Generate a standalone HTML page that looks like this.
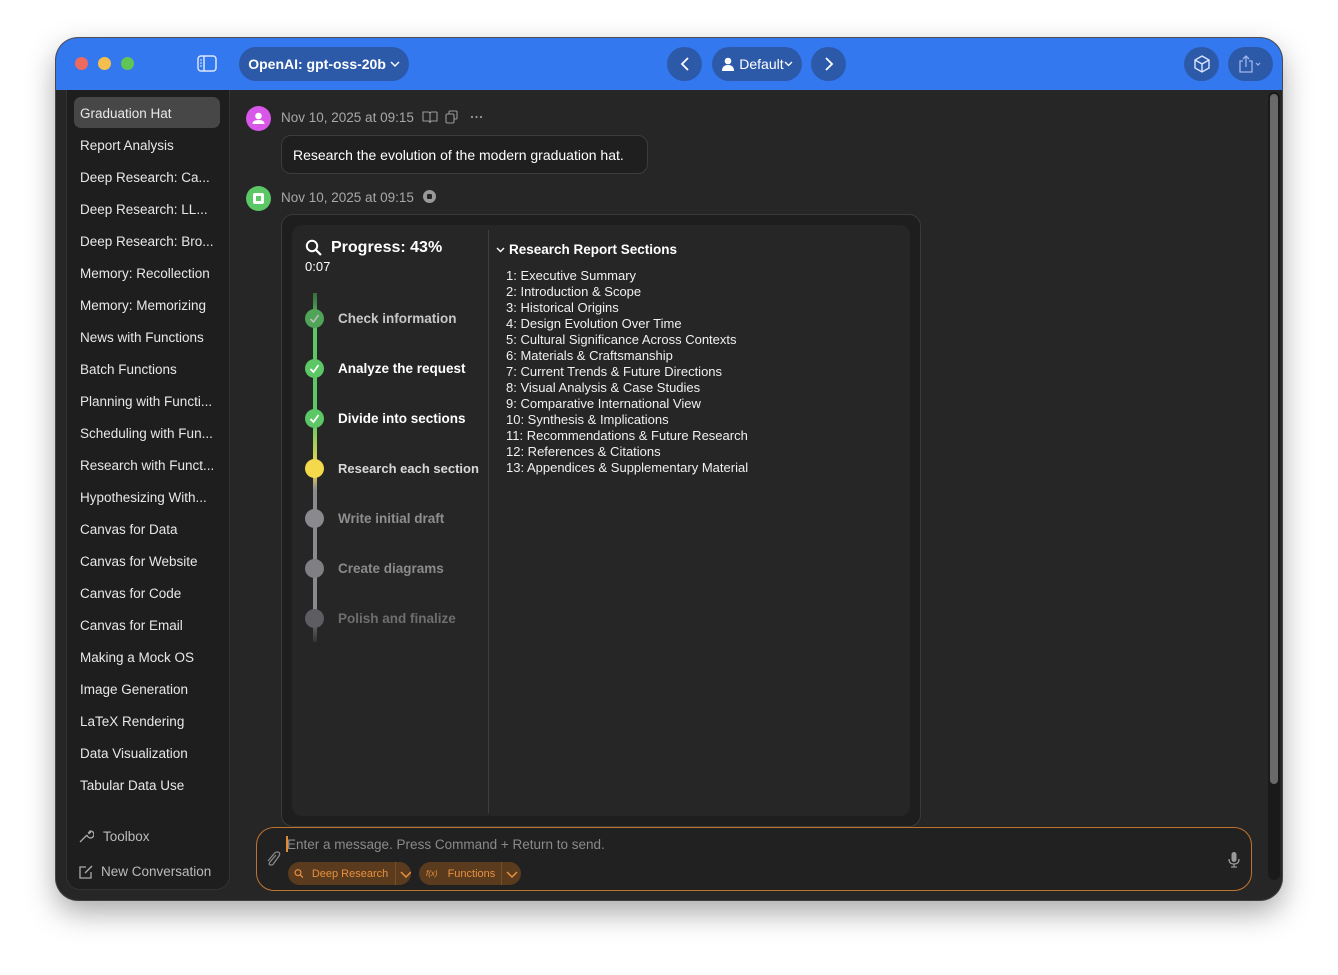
<!DOCTYPE html>
<html><head><meta charset="utf-8"><style>
*{box-sizing:border-box;margin:0;padding:0}
body{width:1338px;height:975px;background:#fff;font-family:"Liberation Sans",sans-serif;position:relative;overflow:hidden}
.win{position:absolute;left:56px;top:38px;width:1226px;height:862px;border-radius:22px;background:#262626;overflow:hidden;box-shadow:0 12px 30px rgba(0,0,0,.35),0 0 0 1px #555}
.tb{position:absolute;left:0;top:0;width:100%;height:52px;background:#3478f0}
.dot{position:absolute;top:19px;width:13px;height:13px;border-radius:50%}
.pill{position:absolute;top:9px;height:34px;border-radius:17px;background:#2c5aa8;color:#fff;font-size:14px;font-weight:bold;display:flex;align-items:center;justify-content:center;white-space:nowrap}
.side{position:absolute;left:10px;top:52px;width:164px;height:800px;background:#1e1e1e;border:1px solid #333;border-top:none;border-radius:0 0 14px 14px}
.si{position:absolute;left:24px;font-size:13.5px;color:#e8e8e8;white-space:nowrap}
.sel{position:absolute;width:146px;height:31px;background:#474747;border-radius:7px}
.t{position:absolute;white-space:nowrap}
.step{position:absolute;left:338px;font-size:13.5px;font-weight:bold;white-space:nowrap}
.node{position:absolute;left:305px;width:19px;height:19px;border-radius:50%}
.chip span{white-space:nowrap}
</style></head><body>
<div class="win">
 <div class="tb">
  <div class="dot" style="left:19px;background:#ed6a5e"></div>
  <div class="dot" style="left:42px;background:#f4bf4f"></div>
  <div class="dot" style="left:65px;background:#61c554"></div>
  <svg style="position:absolute;left:141px;top:17px" width="20" height="17" viewBox="0 0 20 17"><rect x="1" y="1" width="18" height="15" rx="3" fill="none" stroke="#dbe6ff" stroke-width="1.5"/><line x1="7" y1="1" x2="7" y2="16" stroke="#dbe6ff" stroke-width="1.5"/><line x1="3" y1="5" x2="5" y2="5" stroke="#dbe6ff"/><line x1="3" y1="8" x2="5" y2="8" stroke="#dbe6ff"/><line x1="3" y1="11" x2="5" y2="11" stroke="#dbe6ff"/></svg>
  <div class="pill" style="left:183px;width:170px">OpenAI: gpt-oss-20b&nbsp;<svg width="10" height="8"><path d="M1 2 L5 6 L9 2" fill="none" stroke="#fff" stroke-width="1.4"/></svg></div>
  <div class="pill" style="left:611px;width:35px"><svg width="12" height="16"><path d="M9 2 L3 8 L9 14" fill="none" stroke="#fff" stroke-width="1.8"/></svg></div>
  <div class="pill" style="left:656px;width:90px;font-weight:normal;font-size:14px"><svg width="14" height="14" viewBox="0 0 14 14"><circle cx="7" cy="4" r="3.3" fill="#fff"/><path d="M1 14 Q1 8 7 8 Q13 8 13 14Z" fill="#fff"/></svg>&nbsp;Default<svg width="9" height="8"><path d="M1 2 L4.5 5.5 L8 2" fill="none" stroke="#fff" stroke-width="1.3"/></svg></div>
  <div class="pill" style="left:755px;width:35px"><svg width="12" height="16"><path d="M3 2 L9 8 L3 14" fill="none" stroke="#fff" stroke-width="1.8"/></svg></div>
  <div class="pill" style="left:1128px;width:35px"><svg width="18" height="18" viewBox="0 0 18 18"><path d="M9 1 L16 5 L16 13 L9 17 L2 13 L2 5Z M2 5 L9 9 L16 5 M9 9 L9 17" fill="none" stroke="#dbe6ff" stroke-width="1.4"/></svg></div>
  <div class="pill" style="left:1172px;width:45px"><svg width="26" height="18" viewBox="0 0 26 18"><path d="M5 6 L2 6 L2 17 L14 17 L14 6 L11 6 M8 12 L8 1 M5 4 L8 1 L11 4" fill="none" stroke="#9fb8e8" stroke-width="1.3"/><path d="M18 8 L20 10 L22 8" fill="none" stroke="#9fb8e8" stroke-width="1.2"/></svg></div>
 </div>
 <div class="side"></div>
 <div class="sel" style="left:18px;top:59px"></div>
 <div class="si" style="top:68px">Graduation Hat</div>
 <div class="si" style="top:100px">Report Analysis</div>
 <div class="si" style="top:132px">Deep Research: Ca...</div>
 <div class="si" style="top:164px">Deep Research: LL...</div>
 <div class="si" style="top:196px">Deep Research: Bro...</div>
 <div class="si" style="top:228px">Memory: Recollection</div>
 <div class="si" style="top:260px">Memory: Memorizing</div>
 <div class="si" style="top:292px">News with Functions</div>
 <div class="si" style="top:324px">Batch Functions</div>
 <div class="si" style="top:356px">Planning with Functi...</div>
 <div class="si" style="top:388px">Scheduling with Fun...</div>
 <div class="si" style="top:420px">Research with Funct...</div>
 <div class="si" style="top:452px">Hypothesizing With...</div>
 <div class="si" style="top:484px">Canvas for Data</div>
 <div class="si" style="top:516px">Canvas for Website</div>
 <div class="si" style="top:548px">Canvas for Code</div>
 <div class="si" style="top:580px">Canvas for Email</div>
 <div class="si" style="top:612px">Making a Mock OS</div>
 <div class="si" style="top:644px">Image Generation</div>
 <div class="si" style="top:676px">LaTeX Rendering</div>
 <div class="si" style="top:708px">Data Visualization</div>
 <div class="si" style="top:740px">Tabular Data Use</div>
 <svg style="position:absolute;left:22px;top:790px" width="16" height="16" viewBox="0 0 16 16"><path d="M2 14 L9 7 M9 7 A3.5 3.5 0 1 0 12 3 L10.5 5 L11 5.5 L13 4" fill="none" stroke="#aaa" stroke-width="1.3"/></svg>
 <div class="si" style="top:791px;left:47px;color:#bbb">Toolbox</div>
 <svg style="position:absolute;left:22px;top:826px" width="16" height="16" viewBox="0 0 16 16"><path d="M8 3 L2 3 L2 14 L13 14 L13 8" fill="none" stroke="#aaa" stroke-width="1.3"/><path d="M7 9 L14 2" stroke="#aaa" stroke-width="1.4"/></svg>
 <div class="si" style="top:826px;left:45px;color:#bbb">New Conversation</div>
 <div style="position:absolute;left:1212px;top:54px;width:12px;height:788px;background:#1a1a1a;border-radius:6px"><div style="margin:2px;width:8px;height:690px;background:#6a6a6a;border-radius:4px"></div></div>
</div>
<div style="position:absolute;left:246px;top:106px;width:25px;height:25px;border-radius:50%;background:#d856e8"><svg width="25" height="25" viewBox="0 0 25 25"><circle cx="12.5" cy="10" r="3.3" fill="#fff"/><path d="M6.5 18 Q6.5 14 12.5 14 Q18.5 14 18.5 18Z" fill="#fff"/></svg></div>
<div class="t" style="left:281px;top:110px;font-size:13.5px;color:#a8a8a8">Nov 10, 2025 at 09:15</div>
<svg style="position:absolute;left:422px;top:110px" width="64" height="14" viewBox="0 0 64 14"><path d="M1 2 L6 2 Q8 2 8 4 L8 13 Q8 11 6 11 L1 11Z M15 2 L10 2 Q8 2 8 4 M8 13 Q8 11 10 11 L15 11 L15 2" fill="none" stroke="#999" stroke-width="1.1"/><rect x="24" y="4" width="8" height="9" rx="1.5" fill="none" stroke="#999" stroke-width="1.1"/><path d="M27 4 L27 2 Q27 1 28 1 L34 1 Q35 1 35 2 L35 8 Q35 9 34 9 L32 9" fill="none" stroke="#999" stroke-width="1.1"/><circle cx="50" cy="7" r="1.1" fill="#999"/><circle cx="54.5" cy="7" r="1.1" fill="#999"/><circle cx="59" cy="7" r="1.1" fill="#999"/></svg>
<div style="position:absolute;left:281px;top:135px;width:367px;height:39px;border:1px solid #3c3c3c;border-radius:10px;background:#1f1f1f;color:#fff;font-size:14px;padding:11px 0 0 11px;white-space:nowrap">Research the evolution of the modern graduation hat.</div>
<div style="position:absolute;left:246px;top:186px;width:25px;height:25px;border-radius:50%;background:#5cc765"><svg width="25" height="25" viewBox="0 0 25 25"><rect x="7" y="7" width="11" height="11" rx="2" fill="#fff"/><rect x="10" y="10" width="5" height="5" fill="#5cc765"/></svg></div>
<div class="t" style="left:281px;top:190px;font-size:13.5px;color:#a8a8a8">Nov 10, 2025 at 09:15</div>
<div style="position:absolute;left:423px;top:190px;width:13px;height:13px;border-radius:50%;background:#999"><div style="margin:4px;width:5px;height:5px;background:#262626;border-radius:1px"></div></div>
<div style="position:absolute;left:281px;top:214px;width:640px;height:613px;border:1px solid #3a3a3a;border-radius:12px;background:#1e1e1e"></div>
<div style="position:absolute;left:292px;top:225px;width:618px;height:591px;border-radius:10px;background:#262626"></div>
<div style="position:absolute;left:488px;top:230px;width:1px;height:583px;background:#3e3e3e"></div>
<svg style="position:absolute;left:305px;top:239px" width="18" height="18" viewBox="0 0 18 18"><circle cx="7" cy="7" r="5.2" fill="none" stroke="#fff" stroke-width="2"/><path d="M11 11 L16 16" stroke="#fff" stroke-width="2.2"/></svg>
<div class="t" style="left:331px;top:239px;font-size:16px;font-weight:bold;color:#fff">Progress: 43%</div>
<div class="t" style="left:305px;top:259px;font-size:13px;color:#fff">0:07</div>
<div style="position:absolute;left:313px;top:293px;width:4px;height:132px;background:linear-gradient(#3a6a3e,#5cc765 30px)"></div>
<div style="position:absolute;left:313px;top:420px;width:4px;height:50px;background:linear-gradient(#5cc765,#f5d94c)"></div>
<div style="position:absolute;left:313px;top:470px;width:4px;height:172px;background:linear-gradient(#f5d94c,#8a8a8e 20px,#8a8a8e 140px,#333)"></div>
<div class="node" style="top:309px;background:#4fa457"></div>
<div class="node" style="top:359px;background:#5cc765"></div>
<div class="node" style="top:409px;background:#5cc765"></div>
<svg style="position:absolute;left:305px;top:309px" width="19" height="120"><path d="M5.5 10 L8.5 13 L13.5 6" fill="none" stroke="#bbb" stroke-width="1.6"/><path d="M5.5 60 L8.5 63 L13.5 56" fill="none" stroke="#fff" stroke-width="1.8"/><path d="M5.5 110 L8.5 113 L13.5 106" fill="none" stroke="#fff" stroke-width="1.8"/></svg>
<div class="node" style="top:459px;background:#f5d94c"></div>
<div class="node" style="top:509px;background:#8a8a8e"></div>
<div class="node" style="top:559px;background:#808084"></div>
<div class="node" style="top:609px;background:#5e5e62"></div>
<div class="step" style="top:311px;color:#c8c8c8">Check information</div>
<div class="step" style="top:361px;color:#fff">Analyze the request</div>
<div class="step" style="top:411px;color:#fff">Divide into sections</div>
<div class="step" style="top:461px;color:#d8d8d8;font-size:13px">Research each section</div>
<div class="step" style="top:511px;color:#8e8e8e">Write initial draft</div>
<div class="step" style="top:561px;color:#8a8a8a">Create diagrams</div>
<div class="step" style="top:611px;color:#6e6e6e">Polish and finalize</div>
<svg style="position:absolute;left:496px;top:246px" width="10" height="8"><path d="M1 2 L4.5 5.5 L8 2" fill="none" stroke="#fff" stroke-width="1.4"/></svg>
<div class="t" style="left:509px;top:242px;font-size:13.5px;font-weight:bold;color:#fff">Research Report Sections</div>
<div class="t" style="left:506px;top:268px;font-size:13px;color:#f0f0f0;line-height:16px">1: Executive Summary<br>2: Introduction &amp; Scope<br>3: Historical Origins<br>4: Design Evolution Over Time<br>5: Cultural Significance Across Contexts<br>6: Materials &amp; Craftsmanship<br>7: Current Trends &amp; Future Directions<br>8: Visual Analysis &amp; Case Studies<br>9: Comparative International View<br>10: Synthesis &amp; Implications<br>11: Recommendations &amp; Future Research<br>12: References &amp; Citations<br>13: Appendices &amp; Supplementary Material</div>
<div style="position:absolute;left:256px;top:827px;width:996px;height:64px;border:1.5px solid #c0732e;border-radius:18px;background:#212121"></div>
<div style="position:absolute;left:286px;top:836px;width:2px;height:16px;background:#e08a3a"></div>
<div class="t" style="left:287px;top:837px;font-size:13.5px;color:#8a8a8a">Enter a message. Press Command + Return to send.</div>
<svg style="position:absolute;left:265px;top:850px" width="16" height="18" viewBox="0 0 16 18"><path d="M11 5 L5 12 Q3 15 6 15 Q8 15 9 13 L14 6 Q16 2 12 2 Q10 2 8 5 L3 11" fill="none" stroke="#888" stroke-width="1.3"/></svg>
<svg style="position:absolute;left:1227px;top:851px" width="14" height="18" viewBox="0 0 14 18"><rect x="4.5" y="1" width="5" height="10" rx="2.5" fill="#999"/><path d="M2 8 Q2 13 7 13 Q12 13 12 8 M7 13 L7 16 M4 16 L10 16" fill="none" stroke="#999" stroke-width="1.3"/></svg>
<div class="chip" style="position:absolute;left:288px;top:862px;width:123px;height:23px;border-radius:12px;background:#5a3b1e;color:#e8913e;font-size:11px;display:flex;align-items:center"><svg style="margin-left:6px" width="11" height="11" viewBox="0 0 11 11"><circle cx="4.5" cy="4.5" r="3.3" fill="none" stroke="#e8913e" stroke-width="1.3"/><path d="M7 7 L10 10" stroke="#e8913e" stroke-width="1.4"/></svg><span style="margin-left:8px">Deep Research</span><span style="margin-left:7px;border-left:1px solid #7a4f26;height:23px;width:1px"></span><svg style="margin-left:4px" width="12" height="10"><path d="M1 3 L6 8 L11 3" fill="none" stroke="#e8913e" stroke-width="1.5"/></svg></div>
<div class="chip" style="position:absolute;left:419px;top:862px;width:102px;height:23px;border-radius:12px;background:#5a3b1e;color:#e8913e;font-size:11px;display:flex;align-items:center"><span style="margin-left:7px;font-size:8px;font-style:italic">f(x)</span><span style="margin-left:10px">Functions</span><span style="margin-left:6px;border-left:1px solid #7a4f26;height:23px;width:1px"></span><svg style="margin-left:4px" width="12" height="10"><path d="M1 3 L6 8 L11 3" fill="none" stroke="#e8913e" stroke-width="1.5"/></svg></div>
</body></html>
